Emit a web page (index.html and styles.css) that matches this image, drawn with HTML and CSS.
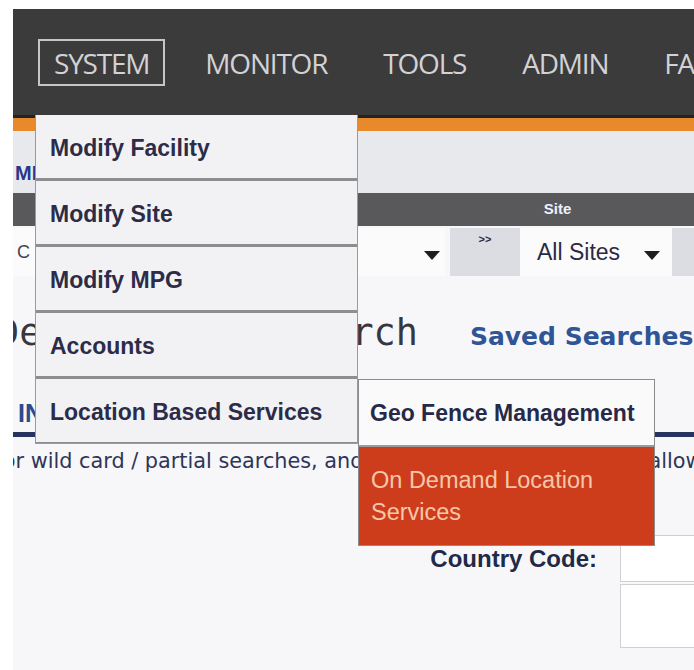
FILE: index.html
```html
<!DOCTYPE html>
<html lang="en">
<head>
<meta charset="utf-8">
<title>Device Query Search</title>
<link rel="stylesheet" href="styles.css">
</head>
<body>
<div class="frame">
  <header class="masthead">
    <nav class="topnav">
      <a class="nav-item active">SYSTEM</a>
      <a class="nav-item">MONITOR</a>
      <a class="nav-item">TOOLS</a>
      <a class="nav-item">ADMIN</a>
      <a class="nav-item">FAVORITES</a>
    </nav>
    <div class="accent"></div>
    <div class="crumbs"><span class="crumb">MIS</span></div>
    <div class="filter-head"><span class="fh-site">Site</span></div>
  </header>

  <div class="filter-row">
    <div class="select sel-main"><span class="sel-text">C</span><span class="caret"></span></div>
    <div class="swap">&gt;&gt;</div>
    <div class="select sel-site"><span class="sel-text">All Sites</span><span class="caret"></span></div>
    <div class="more"></div>
  </div>

  <div class="title-row">
    <h1 class="page-title">Device Query Search</h1>
    <a class="saved">Saved Searches</a>
  </div>

  <div class="tabs"><span class="tab">INDIVIDUAL</span></div>

  <p class="hint">Use * for wild card / partial searches, and leave other fields blank to allow all values</p>

  <form class="search-form">
    <label class="f-label">Country Code:</label>
    <span class="f-input"></span>
    <label class="f-label"></label>
    <span class="f-input tall"></span>
  </form>
</div>

<!-- SYSTEM dropdown, opened -->
<ul class="sys-menu">
  <li class="mi">Modify Facility</li>
  <li class="mi">Modify Site</li>
  <li class="mi">Modify MPG</li>
  <li class="mi">Accounts</li>
  <li class="mi has-sub">Location Based Services
    <ul class="sub-menu">
      <li class="si">Geo Fence Management</li>
      <li class="si hot">On Demand Location Services</li>
    </ul>
  </li>
</ul>
</body>
</html>
```

FILE: styles.css
```css
body {
  margin: 0;
  background: #ffffff;
  font-family: "Liberation Sans", Arial, sans-serif;
}

.frame {
  margin: 9px 0 0 13px;
  height: 661px;
  overflow: hidden;
  background: #f7f7f9;
}

/* top navigation */
.topnav {
  height: 106px;
  background: #3b3b3c;
  border-bottom: 3px solid #232324;
  display: flex;
  align-items: center;
  gap: 24px;
  padding-left: 25px;
  white-space: nowrap;
}

.nav-item {
  height: 43px;
  line-height: 45px;
  padding: 0 14px;
  border: 2px solid transparent;
  color: #d2d2d4;
  font-family: "Open Sans", sans-serif;
  font-size: 28px;
  letter-spacing: -1.2px;
}

.nav-item.active {
  border-color: #c6c6c8;
}

.accent {
  height: 13px;
  background: #e8892b;
}

.crumbs {
  height: 62px;
  background: #e8e9ed;
  padding: 31px 0 0 2px;
  box-sizing: border-box;
}

.crumb {
  color: #27378a;
  font-weight: bold;
  font-size: 20px;
  line-height: 22px;
}

.filter-head {
  height: 33px;
  background: #59595b;
  display: flex;
}

.fh-site {
  margin-left: 437px;
  width: 215px;
  text-align: center;
  color: #eef0ff;
  font-weight: bold;
  font-size: 15px;
  line-height: 31px;
}

/* filter selects */
.filter-row {
  display: flex;
  height: 48px;
  margin-top: 2px;
}

.select {
  display: flex;
  align-items: center;
  justify-content: space-between;
  background: #fbfbfc;
  box-sizing: border-box;
}

.sel-main {
  width: 432px;
  padding: 0 5px 0 4px;
}

.sel-main .sel-text {
  font-size: 18px;
  color: #44444e;
}

.sel-text {
  color: #2a2a44;
  font-size: 23px;
}

.caret {
  width: 0;
  height: 0;
  margin-top: 6px;
  border-left: 8px solid transparent;
  border-right: 8px solid transparent;
  border-top: 9px solid #1e1e22;
}

.swap {
  width: 70px;
  margin-left: 5px;
  background: #dcdde2;
  text-align: center;
  font-size: 11px;
  font-weight: bold;
  color: #2a2a40;
  padding-top: 5px;
  box-sizing: border-box;
}

.sel-site {
  width: 152px;
  padding: 0 12px 0 17px;
}

.more {
  flex: 1;
  background: #dcdde2;
}

/* page title */
.title-row {
  display: flex;
  align-items: baseline;
  gap: 52px;
  margin-top: 35px;
  margin-left: -16px;
  white-space: nowrap;
}

.page-title {
  margin: 0;
  font-family: "DejaVu Sans Mono", monospace;
  font-weight: normal;
  font-size: 36.8px;
  line-height: 44px;
  color: #37373d;
}

.saved {
  color: #2f5597;
  font-family: "DejaVu Sans", sans-serif;
  font-weight: bold;
  font-size: 25px;
}

/* tabs */
.tabs {
  margin-top: 43px;
  padding: 0 0 4px 5px;
  border-bottom: 5px solid #27345f;
}

.tab {
  color: #2c4a8c;
  font-weight: bold;
  font-size: 25px;
  line-height: 30px;
}

.hint {
  margin: 12px 0 0 -80px;
  white-space: nowrap;
  font-family: "DejaVu Sans", sans-serif;
  font-size: 20.8px;
  line-height: 24px;
  color: #2d3558;
}

/* search form */
.search-form {
  display: grid;
  grid-template-columns: 584px 1fr;
  column-gap: 23px;
  row-gap: 2px;
  align-items: center;
  margin-top: 62px;
}

.f-label {
  text-align: right;
  font-weight: bold;
  font-size: 24px;
  color: #1f2a48;
}

.f-input {
  height: 47px;
  background: #ffffff;
  border: 1px solid #cfd0d4;
  border-right: none;
  box-sizing: border-box;
}

.f-input.tall {
  height: 64px;
}

/* SYSTEM dropdown */
.sys-menu {
  position: absolute;
  left: 35px;
  top: 115px;
  width: 323px;
  box-sizing: border-box;
  margin: 0;
  padding: 0;
  list-style: none;
  background: #f2f2f4;
  border: 1px solid #9a9a9c;
  border-top: none;
}

.mi {
  height: 59px;
  padding: 4px 14px 0;
  border-bottom: 3px solid #8e8e90;
  font-weight: bold;
  font-size: 23px;
  line-height: 59px;
  color: #2c2c48;
  white-space: nowrap;
}

.mi:last-child {
  border-bottom-width: 1px;
}

.has-sub {
  position: relative;
}

.sub-menu {
  position: absolute;
  left: calc(100% + 1px);
  top: 0;
  width: 297px;
  margin: 0;
  padding: 0;
  list-style: none;
  box-sizing: border-box;
  border: 1px solid #8c8c8e;
  background: #fafafb;
}

.si {
  height: 60px;
  padding: 5px 11px 0;
  border-bottom: 2px solid #9a9a9c;
  font-weight: bold;
  font-size: 23px;
  line-height: 57px;
  color: #262a48;
  white-space: nowrap;
}

.si.hot {
  height: auto;
  padding: 17px 12px 17px;
  border-bottom: none;
  background: #cd3d1b;
  color: #f8c6aa;
  font-weight: normal;
  font-size: 23.5px;
  line-height: 32px;
  white-space: normal;
}
```
